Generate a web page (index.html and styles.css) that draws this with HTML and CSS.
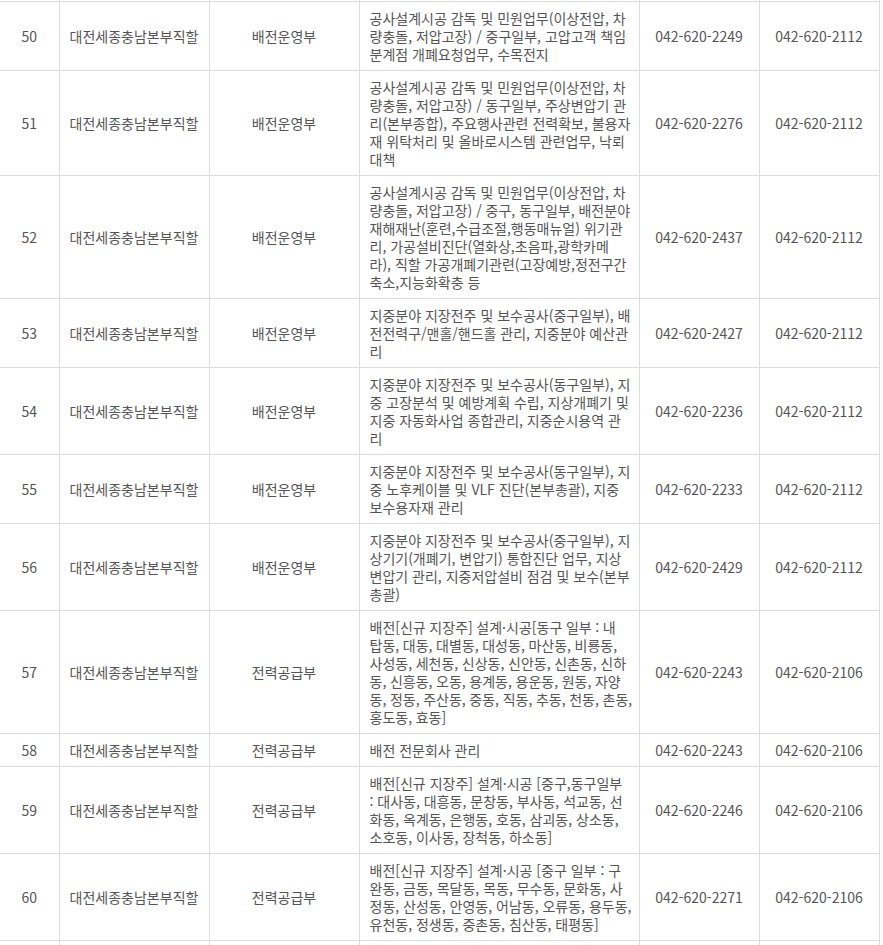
FILE: index.html
```html
<!DOCTYPE html>
<html lang="ko">
  <head>
    <meta charset="utf-8">
    <title>업무분장</title>
    <link rel="stylesheet" href="styles.css">
  </head>
  <body>
    <table class="duty-table">
      <colgroup>
        <col class="col-no">
        <col class="col-office">
        <col class="col-dept">
        <col class="col-task">
        <col class="col-tel">
        <col class="col-fax">
      </colgroup>
      <tbody>
        <!-- tail of the previous row, cut off by the scroll -->
        <tr class="cut-top"><td></td><td></td><td></td><td></td><td></td><td></td></tr>
        <tr>
          <td>50</td>
          <td>대전세종충남본부직할</td>
          <td>배전운영부</td>
          <td class="task">공사설계시공 감독 및 민원업무(이상전압, 차량충돌, 저압고장) / 중구일부, 고압고객 책임분계점 개폐요청업무, 수목전지</td>
          <td>042-620-2249</td>
          <td>042-620-2112</td>
        </tr>
        <tr>
          <td>51</td>
          <td>대전세종충남본부직할</td>
          <td>배전운영부</td>
          <td class="task">공사설계시공 감독 및 민원업무(이상전압, 차량충돌, 저압고장) / 동구일부, 주상변압기 관리(본부종합), 주요행사관련 전력확보, 불용자재 위탁처리 및 올바로시스템 관련업무, 낙뢰대책</td>
          <td>042-620-2276</td>
          <td>042-620-2112</td>
        </tr>
        <tr>
          <td>52</td>
          <td>대전세종충남본부직할</td>
          <td>배전운영부</td>
          <td class="task">공사설계시공 감독 및 민원업무(이상전압, 차량충돌, 저압고장) / 중구, 동구일부, 배전분야재해재난(훈련,수급조절,행동매뉴얼) 위기관리, 가공설비진단(열화상,초음파,광학카메<br>라), 직할 가공개폐기관련(고장예방,정전구간축소,지능화확충 등</td>
          <td>042-620-2437</td>
          <td>042-620-2112</td>
        </tr>
        <tr>
          <td>53</td>
          <td>대전세종충남본부직할</td>
          <td>배전운영부</td>
          <td class="task">지중분야 지장전주 및 보수공사(중구일부), 배전전력구/맨홀/핸드홀 관리, 지중분야 예산관리</td>
          <td>042-620-2427</td>
          <td>042-620-2112</td>
        </tr>
        <tr>
          <td>54</td>
          <td>대전세종충남본부직할</td>
          <td>배전운영부</td>
          <td class="task">지중분야 지장전주 및 보수공사(동구일부), 지중 고장분석 및 예방계획 수립, 지상개폐기 및 지중 자동화사업 종합관리, 지중순시용역 관리</td>
          <td>042-620-2236</td>
          <td>042-620-2112</td>
        </tr>
        <tr>
          <td>55</td>
          <td>대전세종충남본부직할</td>
          <td>배전운영부</td>
          <td class="task">지중분야 지장전주 및 보수공사(동구일부), 지중 노후케이블 및 VLF 진단(본부총괄), 지중 보수용자재 관리</td>
          <td>042-620-2233</td>
          <td>042-620-2112</td>
        </tr>
        <tr>
          <td>56</td>
          <td>대전세종충남본부직할</td>
          <td>배전운영부</td>
          <td class="task">지중분야 지장전주 및 보수공사(중구일부), 지상기기(개폐기, 변압기) 통합진단 업무, 지상변압기 관리, 지중저압설비 점검 및 보수(본부총괄)</td>
          <td>042-620-2429</td>
          <td>042-620-2112</td>
        </tr>
        <tr>
          <td>57</td>
          <td>대전세종충남본부직할</td>
          <td>전력공급부</td>
          <td class="task tight">배전[신규 지장주] 설계·시공[동구 일부 : 내<br>탑동, 대동, 대별동, 대성동, 마산동, 비룡동, 사성동, 세천동, 신상동, 신안동, 신촌동, 신하동, 신흥동, 오동, 용계동, 용운동, 원동, 자양동, 정동, 주산동, 중동, 직동, 추동, 천동, 촌동, 홍도동, 효동]</td>
          <td>042-620-2243</td>
          <td>042-620-2106</td>
        </tr>
        <tr>
          <td>58</td>
          <td>대전세종충남본부직할</td>
          <td>전력공급부</td>
          <td class="task">배전 전문회사 관리</td>
          <td>042-620-2243</td>
          <td>042-620-2106</td>
        </tr>
        <tr>
          <td>59</td>
          <td>대전세종충남본부직할</td>
          <td>전력공급부</td>
          <td class="task">배전[신규 지장주] 설계·시공 [중구,동구일부<br>: 대사동, 대흥동, 문창동, 부사동, 석교동, 선화동, 옥계동, 은행동, 호동, 삼괴동, 상소동, 소호동, 이사동, 장척동, 하소동]</td>
          <td>042-620-2246</td>
          <td>042-620-2106</td>
        </tr>
        <tr>
          <td>60</td>
          <td>대전세종충남본부직할</td>
          <td>전력공급부</td>
          <td class="task">배전[신규 지장주] 설계·시공 [중구 일부 : 구완동, 금동, 목달동, 목동, 무수동, 문화동, 사정동, 산성동, 안영동, 어남동, 오류동, 용두동, 유천동, 정생동, 중촌동, 침산동, 태평동]</td>
          <td>042-620-2271</td>
          <td>042-620-2106</td>
        </tr>
        <tr class="cut-bottom"><td></td><td></td><td></td><td></td><td></td><td></td></tr>
      </tbody>
    </table>
  </body>
</html>
```

FILE: styles.css
```css
body {
  margin: 0;
  padding: 0;
  background-color: #ffffff;
  font-family: "Noto Sans CJK KR", "Noto Sans", sans-serif;
  color: #555555;
}

.duty-table {
  width: 879px;
  border-collapse: collapse;
  table-layout: fixed;
  font-size: 14px;
  line-height: 18px;
}

.col-no { width: 59px; }
.col-office { width: 150px; }
.col-dept { width: 150px; }
.col-task { width: 280px; }
.col-tel { width: 120px; }
.col-fax { width: 120px; }

.duty-table td {
  border: 1px solid #dcdcdc;
  padding: 7px 10px;
  text-align: center;
  vertical-align: middle;
}

.duty-table td:first-child {
  border-left: none;
}

.duty-table td.task {
  padding-right: 6px;
  text-align: left;
}

/* long list of 동 names, spaces a little tighter */
.duty-table td.tight {
  word-spacing: -0.3px;
}

.cut-top td {
  height: 1px;
  padding: 0;
  border-top: none;
}

.cut-bottom td {
  height: 20px;
  padding: 0;
  border-bottom: none;
}
```
